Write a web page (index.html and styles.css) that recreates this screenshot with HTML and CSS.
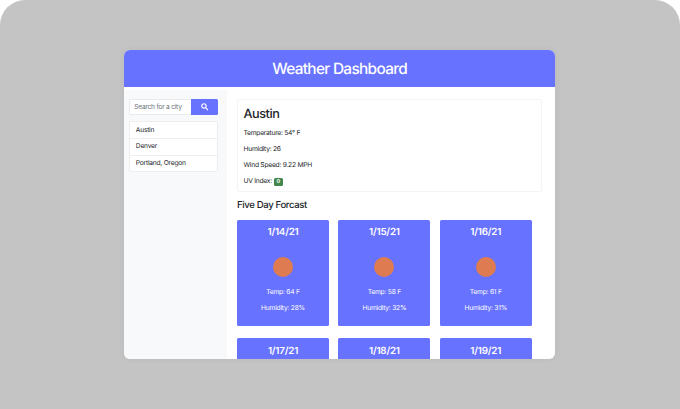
FILE: index.html
```html
<!DOCTYPE html>
<html lang="en">
<head>
<meta charset="utf-8">
<title>Weather Dashboard</title>
<link rel="stylesheet" href="styles.css">
</head>
<body>
<div class="stage">
  <div class="window">
    <header class="header"><h1>Weather Dashboard</h1></header>
    <div class="content">
      <aside class="sidebar">
        <form class="search">
          <input type="text" placeholder="Search for a city" aria-label="City">
          <button type="button" aria-label="Search"><svg viewBox="0 0 16 16"><circle cx="6.4" cy="6.4" r="4.8"/><path d="M10 10l4.6 4.6"/></svg></button>
        </form>
        <ul class="cities"><li>Austin</li><li>Denver</li><li>Portland, Oregon</li></ul>
      </aside>
      <main class="main">
        <section class="current">
          <h2>Austin</h2>
          <p class="temperature">Temperature: 54° F</p>
          <p class="humidity">Humidity: 26</p>
          <p class="wind">Wind Speed: 9.22 MPH</p>
          <p class="uv">UV Index: <span class="badge">0</span></p>
        </section>
        <h3>Five Day Forcast</h3>
        <section class="forecast">
          <article class="day"><h4>1/14/21</h4><i class="sun"></i><p>Temp: 64 F</p><p>Humidity: 28%</p></article>
          <article class="day"><h4>1/15/21</h4><i class="sun"></i><p>Temp: 58 F</p><p>Humidity: 32%</p></article>
          <article class="day"><h4>1/16/21</h4><i class="sun"></i><p>Temp: 61 F</p><p>Humidity: 31%</p></article>
          <article class="day"><h4>1/17/21</h4></article>
          <article class="day"><h4>1/18/21</h4></article>
          <article class="day"><h4>1/19/21</h4></article>
        </section>
      </main>
    </div>
  </div>
</div>
</body>
</html>
```
FILE: styles.css
```css
* { box-sizing: border-box; margin: 0; padding: 0; }
body {
  background: #fff;
  color: #212529;
  font: 400 6.7px/10px Inter, "Liberation Sans", sans-serif;
  letter-spacing: -0.25px;
  text-rendering: geometricPrecision;
  overflow: hidden;
}
.stage {
  height: 409px;
  padding: 50.4px 0 0 124px;
  background: #c4c4c4;
  border-radius: 25px 25px 0 0;
}
.window {
  display: flex;
  flex-direction: column;
  width: 431.3px;
  height: 308.4px;
  background: #fff;
  border-radius: 6px;
  overflow: hidden;
  box-shadow: 0 0 7px rgba(0, 0, 0, 0.05);
}
.header {
  flex: none;
  height: 36.4px;
  background: #6772ff;
  color: #fff;
  text-align: center;
}
h1 { font-size: 15.4px; font-weight: 500; line-height: 38px; letter-spacing: -0.68px; }
.content { display: flex; flex: 1; min-height: 0; }
.sidebar {
  width: 103.4px;
  margin-top: 3.2px;
  padding: 9.4px 9.4px 0 5px;
  background: #f8f9fa;
}
.search { display: flex; height: 15.4px; }
.search input {
  width: 62.4px;
  padding: 0 4.2px;
  background: #fff;
  border: 0.8px solid #e9ebed;
  border-right: 0;
  border-radius: 1.5px 0 0 1.5px;
  font: inherit;
  letter-spacing: -0.26px;
}
.search input::placeholder { color: #6c757d; opacity: 1; }
.search button {
  display: flex;
  flex: 1;
  align-items: center;
  justify-content: center;
  background: #6772ff;
  border: 0;
  border-radius: 0 1.5px 1.5px 0;
}
.search svg { width: 7.4px; height: 7.4px; fill: none; stroke: #fff; stroke-width: 2.6; stroke-linecap: round; }
.cities {
  margin-top: 6.2px;
  background: #fff;
  border: 1px solid #eceeef;
  border-radius: 2px;
  list-style: none;
}
.cities li { height: 16.3px; padding-left: 5.8px; line-height: 15.8px; letter-spacing: -0.24px; }
.cities li:first-child { line-height: 17px; }
.cities li + li { border-top: 1px solid #eceeef; }
.main { flex: 1; padding: 12.6px 13.6px 0 9.6px; }
.current {
  height: 93px;
  padding: 6.8px 5.5px 0;
  border: 1px solid #f4f4f4;
  border-radius: 2px;
}
h2 { height: 20.5px; font-size: 12.7px; font-weight: 500; line-height: 16.5px; letter-spacing: -0.45px; }
.current p { height: 16.1px; }
.badge {
  display: inline-block;
  width: 9.4px;
  height: 8px;
  background: #43874f;
  border-radius: 1.5px;
  color: #fff;
  font-size: 5.4px;
  font-weight: 700;
  line-height: 8px;
  text-align: center;
  vertical-align: -0.3px;
}
h3 { margin: 6.8px 0 8.5px; height: 12px; font-size: 9.6px; font-weight: 500; line-height: 13.6px; letter-spacing: -0.38px; }
.forecast { display: grid; grid-template-columns: repeat(3, 92px); gap: 12.8px 9.4px; }
.day {
  display: flex;
  flex-direction: column;
  align-items: center;
  height: 106px;
  padding-top: 6.5px;
  background: #6772ff;
  border-radius: 1.6px;
  color: #fff;
}
h4 { height: 12px; font-size: 9.8px; font-weight: 600; line-height: 13.6px; letter-spacing: -0.2px; }
.sun { width: 20px; height: 20px; margin: 19.2px 0 9.8px; background: #df7b50; border-radius: 50%; }
.day p { height: 16.1px; letter-spacing: -0.22px; }
```
